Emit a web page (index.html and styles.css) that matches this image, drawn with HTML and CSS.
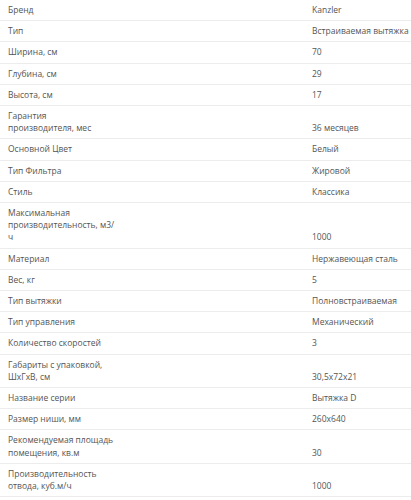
FILE: index.html
```html
<!DOCTYPE html>
<html lang="ru">
<head>
<meta charset="utf-8">
<link rel="stylesheet" href="styles.css">
</head>
<body>
<div class="specs">
  <div class="row"><div class="label">Бренд</div><div class="value">Kanzler</div></div>
  <div class="row"><div class="label">Тип</div><div class="value">Встраиваемая вытяжка</div></div>
  <div class="row"><div class="label">Ширина, см</div><div class="value">70</div></div>
  <div class="row"><div class="label">Глубина, см</div><div class="value">29</div></div>
  <div class="row"><div class="label">Высота, см</div><div class="value">17</div></div>
  <div class="row"><div class="label">Гарантия<br>производителя, мес</div><div class="value">36 месяцев</div></div>
  <div class="row"><div class="label">Основной Цвет</div><div class="value">Белый</div></div>
  <div class="row"><div class="label">Тип Фильтра</div><div class="value">Жировой</div></div>
  <div class="row"><div class="label">Стиль</div><div class="value">Классика</div></div>
  <div class="row"><div class="label">Максимальная<br>производительность, м3/<br>ч</div><div class="value">1000</div></div>
  <div class="row"><div class="label">Материал</div><div class="value">Нержавеющая сталь</div></div>
  <div class="row"><div class="label">Вес, кг</div><div class="value">5</div></div>
  <div class="row"><div class="label">Тип вытяжки</div><div class="value">Полновстраиваемая</div></div>
  <div class="row"><div class="label">Тип управления</div><div class="value">Механический</div></div>
  <div class="row"><div class="label">Количество скоростей</div><div class="value">3</div></div>
  <div class="row"><div class="label">Габариты с упаковкой,<br>ШхГхВ, см</div><div class="value">30,5x72x21</div></div>
  <div class="row"><div class="label">Название серии</div><div class="value">Вытяжка D</div></div>
  <div class="row"><div class="label">Размер ниши, мм</div><div class="value">260x640</div></div>
  <div class="row"><div class="label">Рекомендуемая площадь<br>помещения, кв.м</div><div class="value">30</div></div>
  <div class="row"><div class="label">Производительность<br>отвода, куб.м/ч</div><div class="value">1000</div></div>
</div>
</body>
</html>
```
FILE: styles.css
```css
html, body {
  margin: 0;
  padding: 0;
  background: #ffffff;
}
body {
  font-family: "Open Sans", "Liberation Sans", sans-serif;
  font-size: 8.5px;
  color: #555555;
}
.specs {
  display: flex;
  flex-direction: column;
}
.row {
  display: grid;
  grid-template-columns: 312px 1fr;
  align-items: end;
  border-bottom: 1px solid #ececec;
}
.label {
  padding: 4px 8px;
  line-height: 12.2px;
}
.value {
  padding: 4px 0;
  line-height: 12.2px;
  white-space: nowrap;
}
```
